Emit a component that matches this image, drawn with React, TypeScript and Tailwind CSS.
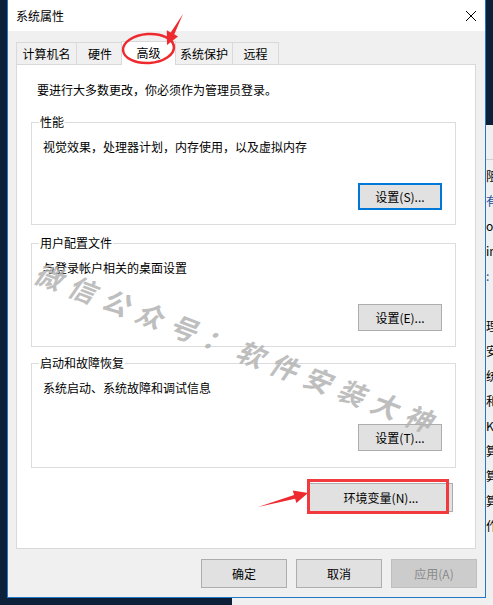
import type { ReactNode } from "react";

function Btn({
  children,
  className = "",
  focused = false,
  disabled = false,
}: {
  children: ReactNode;
  className?: string;
  focused?: boolean;
  disabled?: boolean;
}) {
  const look = focused
    ? "border-2 border-[#0078d7] bg-[#e1e1e1] text-black"
    : disabled
      ? "border border-[#bfbfbf] bg-[#cccccc] text-[#8a8a8a]"
      : "border border-[#adadad] bg-[#e1e1e1] text-black";
  return (
    <button
      type="button"
      className={`flex items-center justify-center text-[12px] leading-none ${look} ${className}`}
    >
      {children}
    </button>
  );
}

function Group({
  title,
  desc,
  btn,
  focused = false,
  className = "",
}: {
  title: string;
  desc: string;
  btn: string;
  focused?: boolean;
  className?: string;
}) {
  return (
    <div className={`ml-[14px] w-[425px] border border-[#dcdcdc] ${className}`}>
      <div className="-mt-[9px] ml-[7px] w-fit bg-white px-px text-[12px] leading-[16px]">
        {title}
      </div>
      <p className="mt-[9px] pl-[11px] text-[12px] leading-[16px]">{desc}</p>
      <div className="mt-[28px] flex justify-end pr-[13px]">
        <Btn focused={focused} className="h-[27px] w-[84px]">
          {btn}
        </Btn>
      </div>
    </div>
  );
}

const tabs = [
  { label: "计算机名", cls: "w-[61px]" },
  { label: "硬件", cls: "-ml-px w-[48px]" },
  { label: "高级", cls: "-ml-[3px] w-[55px]", active: true },
  { label: "系统保护", cls: "-ml-px w-[58px]" },
  { label: "远程", cls: "-ml-px w-[47px]" },
];

// bits of the window behind, only a sliver of it shows
const behind = ["阻", "有", "o", "in", ":", "", "理", "安", "统", "和", "K", "算", "算", "算", "作"];

export default function App() {
  return (
    <div className="relative h-[605px] w-[493px] overflow-hidden bg-[#0c2039] font-['Noto_Sans_CJK_SC','Noto_Sans',sans-serif] text-black">
      {/* window behind the dialog */}
      <div className="absolute bottom-0 left-[232px] right-0 top-[125px] bg-[#f0f0f0]">
        <div className="ml-[254px] mt-[34px] flex flex-col gap-[9px] border-t border-[#d0d0d0] pt-[8px] text-[12px] leading-[16px]">
          {behind.map((c, i) => (
            <span key={i} className={i === 1 || i === 4 ? "h-[16px] text-[#1a4fa0]" : "h-[16px]"}>
              {c}
            </span>
          ))}
        </div>
      </div>

      {/* dialog */}
      <div className="relative z-10 ml-[7px] flex h-[598px] w-[479px] flex-col border-x border-b border-[#1f78c8] bg-[#f0f0f0]">
        <div className="flex h-[31px] items-center justify-between bg-white pl-[8px] pr-[9px]">
          <span className="text-[12px] leading-none">系统属性</span>
          <svg width="12" height="12" viewBox="0 0 12 12" className="mr-[-1px]">
            <path d="M1 1 L11 11 M11 1 L1 11" stroke="#000" strokeWidth="1" fill="none" />
          </svg>
        </div>

        <div className="pl-[8px] pr-[9px]">
          <div className="mt-[10px] flex h-[24px] items-end">
            {tabs.map((t) =>
              t.active ? (
                <div
                  key={t.label}
                  className={`relative z-10 flex h-[24px] items-center justify-center border-x border-t border-[#d9d9d9] bg-white pb-[2px] text-[12px] leading-none ${t.cls}`}
                >
                  {t.label}
                </div>
              ) : (
                <div
                  key={t.label}
                  className={`mb-px flex h-[22px] items-center justify-center border-x border-t border-[#d9d9d9] bg-[#f0f0f0] text-[12px] leading-none ${t.cls}`}
                >
                  {t.label}
                </div>
              ),
            )}
          </div>

          <div className="-mt-px flex h-[485px] flex-col border border-[#d9d9d9] bg-white">
            <p className="mt-[17px] pl-[20px] text-[12px] leading-[16px]">
              要进行大多数更改，你必须作为管理员登录。
            </p>
            <Group
              className="mt-[24px] h-[103px]"
              title="性能"
              desc="视觉效果，处理器计划，内存使用，以及虚拟内存"
              btn="设置(S)..."
              focused
            />
            <Group
              className="mt-[18px] h-[104px]"
              title="用户配置文件"
              desc="与登录帐户相关的桌面设置"
              btn="设置(E)..."
            />
            <Group
              className="mt-[16px] h-[105px]"
              title="启动和故障恢复"
              desc="系统启动、系统故障和调试信息"
              btn="设置(T)..."
            />
            <div className="mt-[15px] flex justify-end pr-[22px]">
              <Btn className="h-[29px] w-[144px]">环境变量(N)...</Btn>
            </div>
          </div>

          <div className="-mr-px mt-[10px] flex justify-end gap-[9px]">
            <Btn className="h-[29px] w-[86px]">确定</Btn>
            <Btn className="h-[29px] w-[86px]">取消</Btn>
            <Btn disabled className="h-[29px] w-[86px]">
              应用(A)
            </Btn>
          </div>
        </div>
      </div>

      {/* watermark */}
      <div className="pointer-events-none absolute left-[238px] top-[348px] z-20 -translate-x-1/2 -translate-y-1/2 rotate-[21deg] whitespace-nowrap text-[27px] font-bold italic leading-none tracking-[9px] text-[#b3b3b3] opacity-85">
        微信公众号：软件安装大神
      </div>

      {/* red annotations */}
      <svg
        className="pointer-events-none absolute left-0 top-0 z-30"
        width="493"
        height="605"
        viewBox="0 0 493 605"
      >
        <ellipse cx="148.5" cy="48.5" rx="25.5" ry="14.5" fill="none" stroke="#ee2a2f" strokeWidth="2.5" transform="rotate(-4 148.5 48.5)" />
        <polygon points="183,14 174.3,34.2 178,36.4 167,45 166.8,30.3 170.7,32.4" fill="#ee2a2f" />
        <polygon points="258,507 295.1,498.7 296.4,503 308,493 292.8,490.6 294.1,494.9" fill="#ee2a2f" />
        <rect x="308.5" y="480.5" width="139" height="32" fill="none" stroke="#f03a3d" strokeWidth="3" />
      </svg>
    </div>
  );
}
